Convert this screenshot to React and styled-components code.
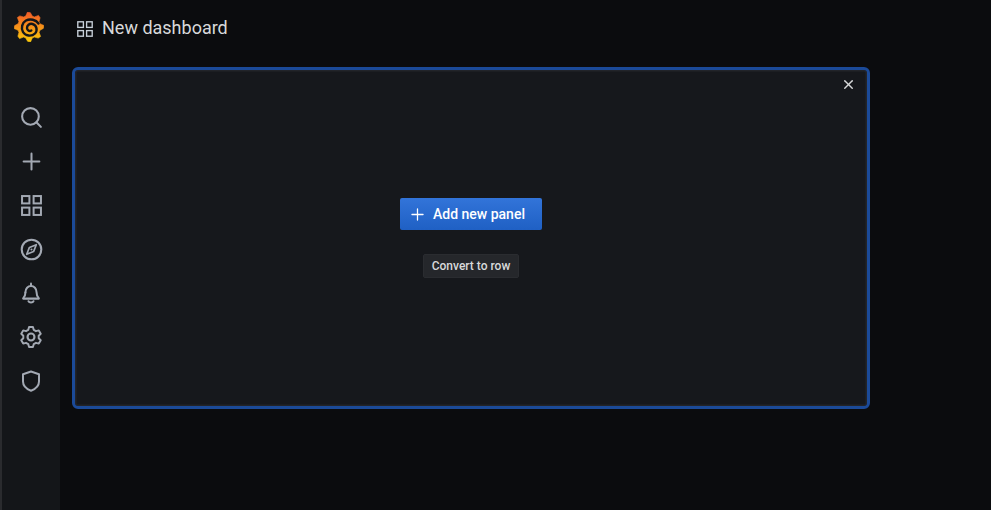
import React from 'react';
import styled, { createGlobalStyle } from 'styled-components';
import { Search, Plus, X } from 'lucide-react';

const Global = createGlobalStyle`
  html, body { margin: 0; padding: 0; height: 100%; background: #0b0c0e; }
  #root { height: 100%; }
  * { box-sizing: border-box; }
`;

const Page = styled.div`
  display: flex;
  width: 991px;
  height: 510px;
  overflow: hidden;
  background: #0b0c0e;
  font-family: Roboto, "Liberation Sans", sans-serif;
`;

const Sidebar = styled.nav`
  width: 60px;
  flex: none;
  display: flex;
  flex-direction: column;
  align-items: center;
  background: #141619;
  border-left: 2px solid #2a2b2e;
  color: #a3a9b3;
`;

const LogoSlot = styled.div`
  height: 95px;
  width: 100%;
  display: flex;
  justify-content: center;
  padding: 12px 5px 0 0;
`;

const NavItem = styled.div`
  height: 44px;
  width: 44px;
  flex: none;
  display: flex;
  align-items: center;
  justify-content: center;
`;

const Main = styled.main`
  flex: 1;
  display: flex;
  flex-direction: column;
  padding-left: 12px;
`;

const TitleRow = styled.header`
  height: 67px;
  flex: none;
  display: flex;
  align-items: flex-start;
  gap: 9px;
  padding: 16px 0 0 5px;
  color: #c7d0d9;
`;

const TitleIcon = styled.span`
  display: flex;
  margin-top: 5px;
`;

const Title = styled.h1`
  margin: 0;
  font-size: 18px;
  line-height: 24px;
  font-weight: 400;
  color: #d8d9da;
`;

const Panel = styled.section`
  position: relative;
  width: 798px;
  height: 342px;
  border: 3px solid #1b4a98;
  border-radius: 6px;
  background: #16181c;
  box-shadow: inset 0 0 0 1.5px #222429;
  display: flex;
  flex-direction: column;
  align-items: center;
  justify-content: center;
  gap: 24px;
`;

const CloseButton = styled.div`
  position: absolute;
  top: 7px;
  right: 11px;
  width: 15px;
  height: 15px;
  display: flex;
  color: #d8d9da;
`;

const AddButton = styled.div`
  width: 142px;
  height: 32px;
  display: flex;
  align-items: center;
  padding-left: 8px;
  gap: 6px;
  border-radius: 2px;
  background: linear-gradient(180deg, #3274d9, #1f60c4);
  color: #fff;
  font-size: 14px;
  font-weight: 500;
`;

const RowButton = styled.div`
  width: 96px;
  height: 24px;
  display: flex;
  align-items: center;
  justify-content: center;
  border-radius: 2px;
  background: #25272b;
  border: 1px solid #2a2c30;
  color: #d8d9da;
  font-size: 12px;
  font-weight: 500;
`;

const Grid = ({ size, sw = 2 }) => (
  <svg width={size} height={size} viewBox="0 0 20 20" fill="none" stroke="currentColor" strokeWidth={sw}>
    <rect x="1" y="1" width="7" height="7" />
    <rect x="12" y="1" width="7" height="7" />
    <rect x="1" y="12" width="7" height="7" />
    <rect x="12" y="12" width="7" height="7" />
  </svg>
);

const Icon = ({ children, size = 24 }) => (
  <svg
    width={size}
    height={size}
    viewBox="0 0 24 24"
    fill="none"
    stroke="currentColor"
    strokeWidth="2"
    strokeLinecap="round"
    strokeLinejoin="round"
  >
    {children}
  </svg>
);

const Compass = () => (
  <Icon size={25}>
    <circle cx="12" cy="12" r="9.4" />
    <path d="M16.6 7.4 L14 14 L7.4 16.6 L10 10 Z" strokeWidth="1.6" />
    <circle cx="12" cy="12" r="1" fill="currentColor" stroke="none" />
  </Icon>
);

const Bell = () => (
  <Icon>
    <path d="M12 2.6 V4.8" />
    <path d="M6.4 11.5 C6.4 7.6 9 5 12 5 C15 5 17.6 7.6 17.6 11.5 C17.6 13.8 18 15.2 19.4 16.6" />
    <path d="M6.4 11.5 C6.4 13.8 6 15.2 4.6 16.6" />
    <path d="M4.2 17.6 H19.8" strokeWidth="2.2" />
    <path d="M9.5 20.2 C10.3 21.8 13.7 21.8 14.5 20.2" />
  </Icon>
);

const Gear = () => (
  <Icon size={26}>
    <circle cx="12" cy="12" r="3.2" />
    <path d="M10.2 2.8 H13.8 L14.5 5.4 L16.6 6.6 L19.2 5.9 L21 9 L19.1 10.9 V13.1 L21 15 L19.2 18.1 L16.6 17.4 L14.5 18.6 L13.8 21.2 H10.2 L9.5 18.6 L7.4 17.4 L4.8 18.1 L3 15 L4.9 13.1 V10.9 L3 9 L4.8 5.9 L7.4 6.6 L9.5 5.4 Z" strokeWidth="1.8" />
  </Icon>
);

const ShieldIcon = () => (
  <Icon>
    <path d="M12 2.5 L20 5.2 V12.5 C20 17 16 20.2 12 21.8 C8 20.2 4 17 4 12.5 V5.2 Z" />
  </Icon>
);

const gearPoints = (() => {
  const pts = [];
  const teeth = 8;
  for (let i = 0; i < teeth * 4; i++) {
    const a = (i / (teeth * 4)) * Math.PI * 2 - Math.PI / 2 - 0.1;
    const phase = i % 4;
    const r = phase === 0 ? 15 : phase === 1 ? 14.4 : 11.4;
    pts.push(`${(15 + r * Math.cos(a)).toFixed(2)},${(15 + r * Math.sin(a)).toFixed(2)}`);
  }
  return pts.join(' ');
})();

const Logo = () => (
  <svg width="30" height="30" viewBox="0 0 30 30">
    <defs>
      <linearGradient id="logoGrad" x1="0" y1="0" x2="0" y2="1">
        <stop offset="0" stopColor="#f05a28" />
        <stop offset="1" stopColor="#fbca0a" />
      </linearGradient>
    </defs>
    <polygon points={gearPoints} fill="url(#logoGrad)" stroke="url(#logoGrad)" strokeLinejoin="round" strokeWidth="0.6" />
    <path
      d="M24.5 11.5 C22 7.5 16 6.5 12 8.5 C8 10.8 6.8 16 9 20 C11.3 24 17.5 25 21 21.5 C24 18.2 22.5 13 18.5 12 C15.5 11.2 12.8 13.5 13 16.2 C13.2 18.5 15.5 19.6 17.3 18.5"
      fill="none"
      stroke="#141619"
      strokeWidth="2.4"
      strokeLinecap="round"
    />
  </svg>
);

const navIcons = [
  <Search key="s" size={25} strokeWidth={2} />,
  <Plus key="p" size={27} strokeWidth={1.8} />,
  <Grid key="g" size={21} sw={1.9} />,
  <Compass key="c" />,
  <Bell key="b" />,
  <Gear key="st" />,
  <ShieldIcon key="sh" />,
];

export default function App() {
  return (
    <Page>
      <Global />
      <Sidebar>
        <LogoSlot><Logo /></LogoSlot>
        {navIcons.map((icon) => <NavItem key={icon.key}>{icon}</NavItem>)}
      </Sidebar>
      <Main>
        <TitleRow>
          <TitleIcon><Grid size={16} sw={1.7} /></TitleIcon>
          <Title>New dashboard</Title>
        </TitleRow>
        <Panel>
          <CloseButton><X size={15} strokeWidth={2.2} /></CloseButton>
          <AddButton>
            <Plus size={19} strokeWidth={1.6} />
            <span>Add new panel</span>
          </AddButton>
          <RowButton>Convert to row</RowButton>
        </Panel>
      </Main>
    </Page>
  );
}
